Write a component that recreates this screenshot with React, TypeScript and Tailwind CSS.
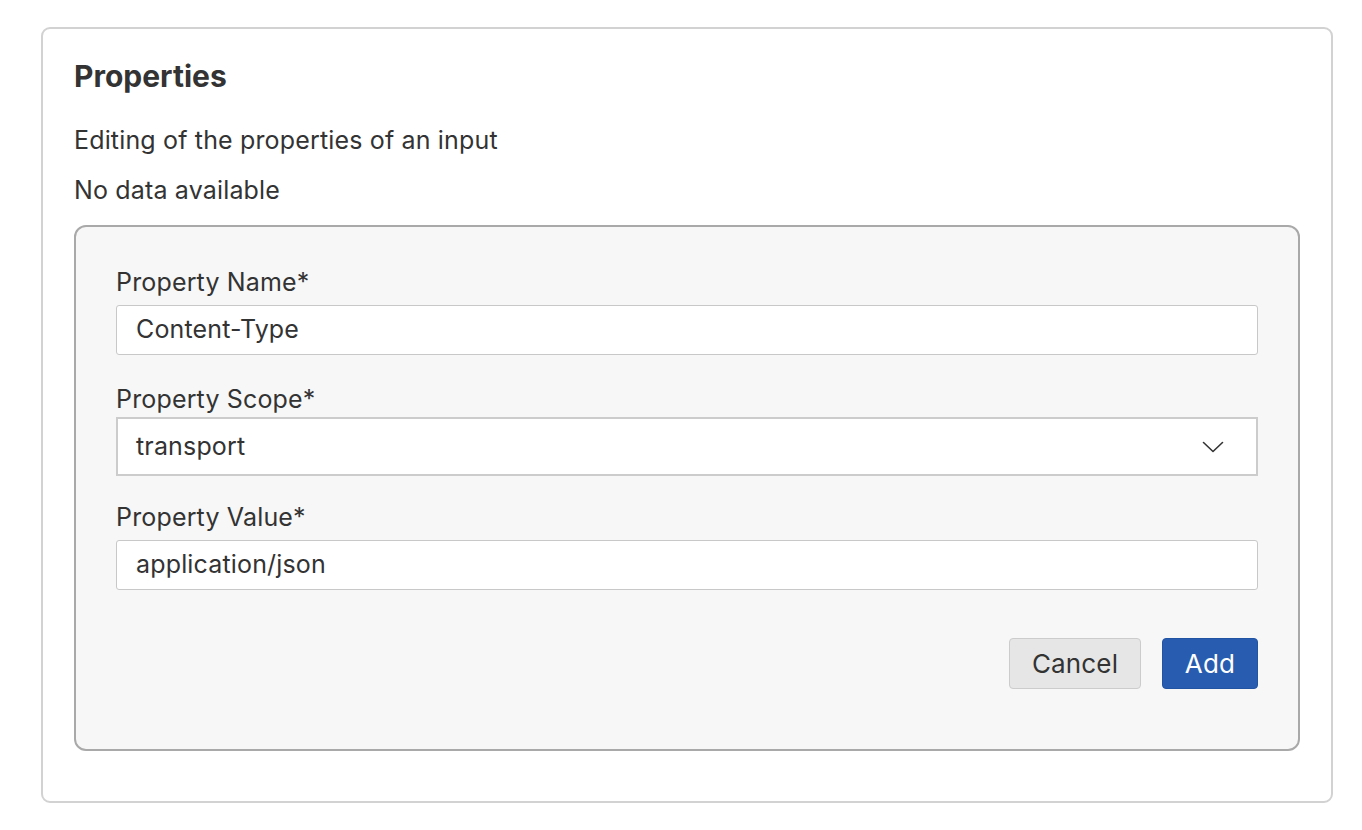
import React from "react";

function Chevron() {
  return (
    <svg width="22" height="12" viewBox="0 0 22 12" fill="none">
      <path d="M1.5 1.5 L11 10.5 L20.5 1.5" stroke="#333" strokeWidth="1.6" strokeLinecap="round" strokeLinejoin="round" />
    </svg>
  );
}

export default function App() {
  return (
    <div className="min-h-[830px] bg-white pt-[27px] pl-[41px] text-[#333] tracking-[0.01em]" style={{ fontFamily: "Inter, 'Noto Sans', sans-serif" }}>
      <div className="w-[1292px] h-[776px] border-2 border-[#d2d2d2] rounded-[9px] pt-[31px] pl-[31px] pr-[31px]">
        <h2 className="text-[30px] leading-[32px] font-bold text-[#333] tracking-normal">Properties</h2>
        <p className="mt-[33px] text-[25px] leading-[30px]">Editing of the properties of an input</p>
        <p className="mt-[20px] text-[25px] leading-[30px]">No data available</p>
        <div className="mt-[20px] h-[526px] border-2 border-[#a9a9a9] rounded-[12px] bg-[#f7f7f7] pt-[40px] px-[40px]">
          <label className="block text-[25px] leading-[30px]">Property Name*</label>
          <div className="mt-[8px] h-[50px] bg-white border border-[#c8c8c8] rounded-[3px] px-[19px] flex items-center text-[25px]">
            Content-Type
          </div>
          <label className="block mt-[29px] text-[25px] leading-[30px]">Property Scope*</label>
          <div className="mt-[3px] h-[59px] bg-white border-2 border-[#cccccc] pl-[18px] pr-[32px] flex items-center justify-between text-[25px]">
            <span>transport</span>
            <Chevron />
          </div>
          <label className="block mt-[26px] text-[25px] leading-[30px]">Property Value*</label>
          <div className="mt-[8px] h-[50px] bg-white border border-[#c8c8c8] rounded-[3px] px-[19px] flex items-center text-[25px]">
            application/json
          </div>
          <div className="mt-[48px] flex justify-end gap-[21px]">
            <button className="w-[132px] h-[51px] bg-[#e6e6e6] border border-[#cccccc] rounded-[4px] text-[26px] text-[#333]">Cancel</button>
            <button className="w-[96px] h-[51px] bg-[#275cb1] border border-[#2254a4] rounded-[4px] text-[26px] text-white">Add</button>
          </div>
        </div>
      </div>
    </div>
  );
}
